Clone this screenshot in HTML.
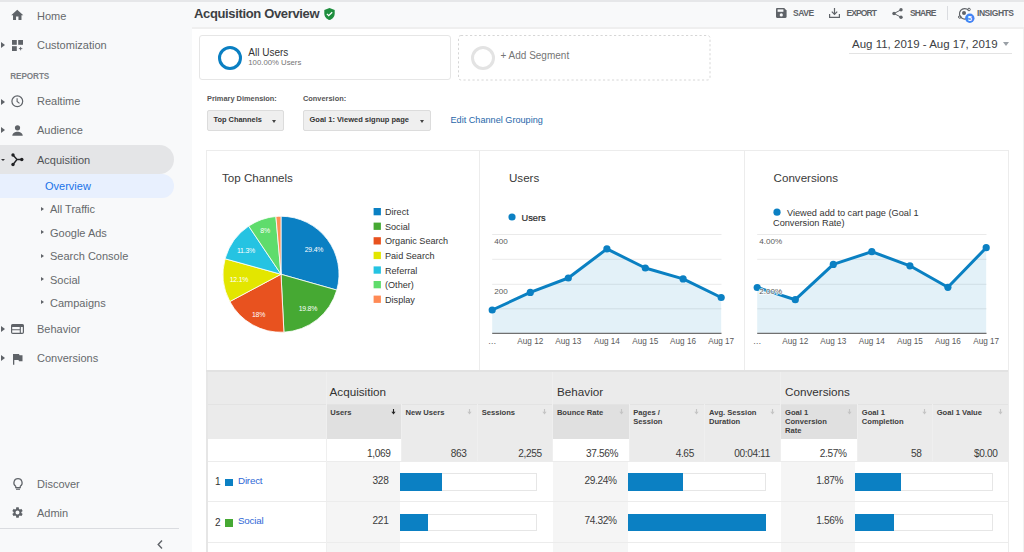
<!DOCTYPE html>
<html><head><meta charset="utf-8">
<style>
*{margin:0;padding:0;box-sizing:border-box}
html,body{width:1024px;height:552px;overflow:hidden;background:#f8f9fa;font-family:"Liberation Sans",sans-serif;color:#3c4043}
.a{position:absolute;white-space:nowrap}
#topline{position:absolute;left:0;top:0;width:1024px;height:2px;background:#e6e7e9}
/* sidebar */
.nav{position:absolute;left:37px;font-size:11px;color:#66696c;line-height:13px}
.sub{position:absolute;left:50px;font-size:11px;color:#66696c;line-height:13px}
.tri{position:absolute;width:0;height:0;border-top:3px solid transparent;border-bottom:3px solid transparent;border-left:4.2px solid #5f6368;margin-top:-0.3px}
.subtri{position:absolute;width:0;height:0;border-top:2.8px solid transparent;border-bottom:2.8px solid transparent;border-left:3.6px solid #5f6368;margin-top:-0.1px}
svg.i{position:absolute;overflow:visible}
/* header */
#content{position:absolute;left:192px;top:27px;width:832px;height:525px;background:#fff;border-top:2px solid #efefef}
.tb{position:absolute;top:8.2px;font-size:8.5px;font-weight:bold;color:#5f6368;line-height:10px;letter-spacing:-0.45px}
</style></head><body>
<div id="topline"></div>

<!-- SIDEBAR -->
<div class="a" style="left:0;top:145px;width:174px;height:29px;background:#e4e5e7;border-radius:0 15px 15px 0"></div>
<div class="a" style="left:0;top:174px;width:174px;height:23.5px;background:#e8f0fe;border-radius:0 12px 12px 0"></div>

<svg class="i" style="left:10.3px;top:8.4px" width="14.5" height="14.5" viewBox="0 0 24 24"><path fill="#5f6368" d="M10 20v-6h4v6h5v-8h3L12 3 2 12h3v8z"/></svg>
<div class="nav" style="top:10px">Home</div>

<div class="tri" style="left:1.2px;top:42.5px"></div>
<svg class="i" style="left:12px;top:39.5px" width="11" height="11" viewBox="0 0 11 11"><rect x="0" y="0" width="4.8" height="4.8" fill="#5f6368"/><rect x="6.2" y="0" width="4.8" height="4.8" fill="#5f6368"/><rect x="0" y="6.2" width="4.8" height="4.8" fill="#5f6368"/><path d="M8.6 6.9v3.4M6.9 8.6h3.4" stroke="#5f6368" stroke-width="0.9"/></svg>
<div class="nav" style="top:39px">Customization</div>

<div class="a" style="left:10.3px;top:71.5px;font-size:8.2px;font-weight:bold;color:#7d8185;letter-spacing:-0.1px;line-height:9px">REPORTS</div>

<div class="tri" style="left:1.2px;top:98.8px"></div>
<svg class="i" style="left:11px;top:95px" width="13" height="13" viewBox="0 0 13 13"><circle cx="6.3" cy="6.3" r="5.4" fill="none" stroke="#5f6368" stroke-width="1.2"/><path d="M6.1 3.3v3.2l2.4 1.9" fill="none" stroke="#5f6368" stroke-width="1.1"/></svg>
<div class="nav" style="top:95px">Realtime</div>

<div class="tri" style="left:1.2px;top:127.5px"></div>
<svg class="i" style="left:12px;top:125px" width="11" height="11" viewBox="0 0 11 11"><circle cx="5.5" cy="2.8" r="2.6" fill="#5f6368"/><path d="M0.3 10.7c0-2.6 3-3.9 5.2-3.9s5.2 1.3 5.2 3.9z" fill="#5f6368"/></svg>
<div class="nav" style="top:124px">Audience</div>

<div class="a" style="left:0.5px;top:158.6px;width:0;height:0;border-left:2.5px solid transparent;border-right:2.5px solid transparent;border-top:2.8px solid #303134"></div>
<svg class="i" style="left:11px;top:153px" width="13" height="13" viewBox="0 0 13 13"><path d="M2 2l4 4.5h5.5M2 11.5l4-5" fill="none" stroke="#202124" stroke-width="1.4"/><circle cx="2" cy="2" r="1.7" fill="#202124"/><circle cx="2" cy="11.5" r="1.7" fill="#202124"/><circle cx="10.8" cy="6.5" r="1.7" fill="#202124"/></svg>
<div class="nav" style="top:154px;color:#505356">Acquisition</div>

<div class="a" style="left:45px;top:180px;font-size:11px;color:#1a73e8;line-height:13px">Overview</div>

<div class="subtri" style="left:41px;top:207px"></div><div class="sub" style="top:203px">All Traffic</div>
<div class="subtri" style="left:41px;top:230.5px"></div><div class="sub" style="top:227px">Google Ads</div>
<div class="subtri" style="left:41px;top:254px"></div><div class="sub" style="top:250px">Search Console</div>
<div class="subtri" style="left:41px;top:277.5px"></div><div class="sub" style="top:274px">Social</div>
<div class="subtri" style="left:41px;top:300.5px"></div><div class="sub" style="top:297px">Campaigns</div>

<div class="tri" style="left:1.2px;top:326.5px"></div>
<svg class="i" style="left:11px;top:324px" width="13" height="10" viewBox="0 0 13 10"><rect x="0.6" y="0.6" width="11.8" height="8.8" rx="1.2" fill="none" stroke="#5f6368" stroke-width="1.2"/><rect x="0.6" y="0.6" width="11.8" height="2.4" fill="#5f6368"/><path d="M1 5.8h8.3M9.3 3v6.4" stroke="#5f6368" stroke-width="1.1"/></svg>
<div class="nav" style="top:323px">Behavior</div>

<div class="tri" style="left:1.2px;top:355.5px"></div>
<svg class="i" style="left:13px;top:353.5px" width="10" height="11" viewBox="0 0 10 11"><path d="M0 0h6l0.5 1.3H9.5v6H6l-0.5-1.3H1.3V10.7H0z" fill="#5f6368"/></svg>
<div class="nav" style="top:352px">Conversions</div>

<svg class="i" style="left:13px;top:478px" width="10" height="12" viewBox="0 0 10 12"><path d="M5 0.7a4.1 4.1 0 0 0-2.3 7.5v1.5h4.6V8.2A4.1 4.1 0 0 0 5 0.7z" fill="none" stroke="#5f6368" stroke-width="1.2"/><path d="M3 11.2h4" stroke="#5f6368" stroke-width="1.2"/></svg>
<div class="nav" style="top:478px">Discover</div>

<svg class="i" style="left:11px;top:506px" width="13" height="13" viewBox="0 0 24 24"><path fill="#5f6368" d="M19.14 12.94c.04-.3.06-.61.06-.94 0-.32-.02-.64-.07-.94l2.03-1.58a.49.49 0 0 0 .12-.61l-1.92-3.32a.488.488 0 0 0-.59-.22l-2.39.96c-.5-.38-1.03-.7-1.62-.94l-.36-2.54a.484.484 0 0 0-.48-.41h-3.84c-.24 0-.43.17-.47.41l-.36 2.54c-.59.24-1.13.57-1.62.94l-2.39-.96c-.22-.08-.47 0-.59.22L2.74 8.87c-.12.21-.08.47.12.61l2.03 1.58c-.05.3-.09.63-.09.94s.02.64.07.94l-2.03 1.58a.49.49 0 0 0-.12.61l1.92 3.32c.12.22.37.29.59.22l2.39-.96c.5.38 1.03.7 1.62.94l.36 2.54c.05.24.24.41.48.41h3.84c.24 0 .44-.17.47-.41l.36-2.54c.59-.24 1.13-.56 1.62-.94l2.39.96c.22.08.47 0 .59-.22l1.92-3.32c.12-.22.07-.47-.12-.61l-2.01-1.58zM12 15.6c-1.98 0-3.6-1.62-3.6-3.6s1.62-3.6 3.6-3.6 3.6 1.62 3.6 3.6-1.62 3.6-3.6 3.6z"/></svg>
<div class="nav" style="top:507px">Admin</div>

<div class="a" style="left:0;top:528px;width:179px;height:1px;background:#dadce0"></div>
<svg class="i" style="left:157px;top:539.5px" width="6" height="9" viewBox="0 0 6 9"><path d="M5 0.6L1.2 4.5 5 8.4" fill="none" stroke="#5f6368" stroke-width="1.4"/></svg>

<!-- HEADER -->
<div class="a" style="left:194px;top:6px;font-size:13px;font-weight:bold;color:#3c4043;letter-spacing:-0.35px;line-height:15px">Acquisition Overview</div>
<svg class="i" style="left:324px;top:7.5px" width="11" height="12" viewBox="0 0 11 12"><path d="M5.5 0L0.3 2.1v3.3c0 3 2.2 5.8 5.2 6.5 3-0.7 5.2-3.5 5.2-6.5V2.1z" fill="#1e8e3e"/><path d="M2.9 5.9l1.8 1.8 3.5-3.5" fill="none" stroke="#fff" stroke-width="1.3"/></svg>

<svg class="i" style="left:775.5px;top:8px" width="11" height="10" viewBox="0 0 11 10"><path d="M0 1.2C0 .5.5 0 1.2 0h7L10.6 2.4v6.4c0 .7-.5 1.2-1.2 1.2H1.2C.5 10 0 9.5 0 8.8z" fill="#5f6368"/><rect x="1.6" y="1.4" width="5.8" height="2.4" fill="#f8f9fa"/><circle cx="5.3" cy="6.9" r="1.6" fill="#f8f9fa"/></svg>
<div class="tb" style="left:793px">SAVE</div>
<svg class="i" style="left:829px;top:8px" width="11" height="10" viewBox="0 0 11 10"><path d="M5.5 0v6.2M2.8 3.7l2.7 2.7 2.7-2.7M0.6 6v3.4h9.8V6" fill="none" stroke="#5f6368" stroke-width="1.2"/></svg>
<div class="tb" style="left:846.5px;letter-spacing:-0.9px">EXPORT</div>
<svg class="i" style="left:892px;top:7.5px" width="11" height="11" viewBox="0 0 11 11"><circle cx="9" cy="1.8" r="1.7" fill="#5f6368"/><circle cx="2" cy="5.5" r="1.7" fill="#5f6368"/><circle cx="9" cy="9.2" r="1.7" fill="#5f6368"/><path d="M9 1.8L2 5.5 9 9.2" fill="none" stroke="#5f6368" stroke-width="1"/></svg>
<div class="tb" style="left:910px;letter-spacing:-0.85px">SHARE</div>
<div class="a" style="left:947px;top:6px;width:1px;height:14px;background:#dadce0"></div>
<svg class="i" style="left:957.5px;top:7px" width="16" height="16" viewBox="0 0 16 16"><path d="M10.4 3.2A5.2 5.2 0 1 0 11.2 9.4" fill="none" stroke="#5f6368" stroke-width="1.2"/><circle cx="6" cy="6" r="2" fill="#5f6368"/><circle cx="11" cy="2.5" r="1.3" fill="none" stroke="#5f6368" stroke-width="1"/><circle cx="1.8" cy="10" r="1.3" fill="none" stroke="#5f6368" stroke-width="1"/><circle cx="11.8" cy="11.2" r="4.7" fill="#4285f4"/><text x="11.8" y="13.9" font-size="7.6" font-weight="bold" fill="#fff" text-anchor="middle" font-family="Liberation Sans">5</text></svg>
<div class="tb" style="left:977px">INSIGHTS</div>

<div id="content"></div>
<div class="a" style="left:1023px;top:29px;width:1px;height:523px;background:#f1f1f1"></div>


<!-- SEGMENTS -->
<div class="a" style="left:199px;top:35px;width:252px;height:45px;border:1px solid #e6e6e6;border-radius:3px;background:#fff"></div>
<div class="a" style="left:218px;top:45.5px;width:24px;height:24px;border:3px solid #0a7fc2;border-radius:50%"></div>
<div class="a" style="left:248.3px;top:46.8px;font-size:10px;color:#333;line-height:11px">All Users</div>
<div class="a" style="left:248.3px;top:58.3px;font-size:7.75px;color:#757575;line-height:9px">100.00% Users</div>
<svg class="i" style="left:458px;top:35px" width="253" height="46" viewBox="0 0 253 46"><rect x="0.5" y="0.5" width="251.5" height="44.5" rx="2.5" fill="none" stroke="#d6d6d6" stroke-width="1" stroke-dasharray="2.2 2.3"/></svg>
<div class="a" style="left:470.5px;top:45.5px;width:24px;height:24px;border:3px solid #e3e3e3;border-radius:50%"></div>
<div class="a" style="left:500.5px;top:50px;font-size:10px;color:#757575;line-height:11px">+ Add Segment</div>

<div class="a" style="left:852px;top:38px;font-size:11.5px;color:#3c4043;line-height:13px">Aug 11, 2019 - Aug 17, 2019</div>
<div class="a" style="left:1002.5px;top:42.3px;width:0;height:0;border-left:3.7px solid transparent;border-right:3.7px solid transparent;border-top:4.3px solid #9aa0a6"></div>
<div class="a" style="left:849px;top:53px;width:163px;height:1px;background:#e3e3e3"></div>

<!-- DIMENSIONS -->
<div class="a" style="left:207px;top:95px;font-size:7.4px;font-weight:bold;color:#555;line-height:8px">Primary Dimension:</div>
<div class="a" style="left:206.5px;top:110.3px;width:77.5px;height:21px;background:#efefef;border:1px solid #dcdcdc;border-radius:2px"></div>
<div class="a" style="left:213.5px;top:116px;font-size:7.4px;font-weight:bold;color:#333;line-height:8px">Top Channels</div>
<div class="a" style="left:272.3px;top:119.7px;width:0;height:0;border-left:2.5px solid transparent;border-right:2.5px solid transparent;border-top:3px solid #444"></div>
<div class="a" style="left:303px;top:95px;font-size:7.4px;font-weight:bold;color:#555;line-height:8px">Conversion:</div>
<div class="a" style="left:303px;top:110.3px;width:128px;height:21px;background:#efefef;border:1px solid #dcdcdc;border-radius:2px"></div>
<div class="a" style="left:309.5px;top:116px;font-size:7.5px;font-weight:bold;color:#333;line-height:8px">Goal 1: Viewed signup page</div>
<div class="a" style="left:419.5px;top:119.7px;width:0;height:0;border-left:2.7px solid transparent;border-right:2.7px solid transparent;border-top:3px solid #444"></div>
<div class="a" style="left:450.5px;top:115px;font-size:9.15px;color:#2767aa;line-height:10px">Edit Channel Grouping</div>


























<!-- CHART PANEL -->
<div class="a" style="left:206px;top:150px;width:803px;height:221px;border:1.5px solid #ececec;border-bottom:none"></div>
<div class="a" style="left:479px;top:150px;width:1px;height:220px;background:#ececec"></div>
<div class="a" style="left:744px;top:150px;width:1px;height:220px;background:#ececec"></div>
<div class="a" style="left:222px;top:170.8px;font-size:11.6px;color:#3a3a3a;line-height:14px">Top Channels</div>
<div class="a" style="left:509px;top:170.8px;font-size:11.6px;color:#3a3a3a;line-height:14px">Users</div>
<div class="a" style="left:773.6px;top:170.8px;font-size:11.6px;color:#3a3a3a;line-height:14px">Conversions</div>
<svg class="i" style="left:0;top:0" width="1024" height="552" viewBox="0 0 1024 552" font-family="Liberation Sans">
<path d="M281.0,274.25L281.00,216.25A58.0,58.0 0 0 1 336.80,290.08Z" fill="#0b80c3" stroke="#fff" stroke-width="0.8" stroke-linejoin="round"/>
<path d="M281.0,274.25L336.80,290.08A58.0,58.0 0 0 1 283.91,332.18Z" fill="#46a933" stroke="#fff" stroke-width="0.8" stroke-linejoin="round"/>
<path d="M281.0,274.25L283.91,332.18A58.0,58.0 0 0 1 229.83,301.55Z" fill="#e8521f" stroke="#fff" stroke-width="0.8" stroke-linejoin="round"/>
<path d="M281.0,274.25L229.83,301.55A58.0,58.0 0 0 1 225.10,258.77Z" fill="#e3e600" stroke="#fff" stroke-width="0.8" stroke-linejoin="round"/>
<path d="M281.0,274.25L225.10,258.77A58.0,58.0 0 0 1 248.70,226.08Z" fill="#25c3e2" stroke="#fff" stroke-width="0.8" stroke-linejoin="round"/>
<path d="M281.0,274.25L248.70,226.08A58.0,58.0 0 0 1 275.90,216.47Z" fill="#5fdc6c" stroke="#fff" stroke-width="0.8" stroke-linejoin="round"/>
<path d="M281.0,274.25L275.90,216.47A58.0,58.0 0 0 1 281.00,216.25Z" fill="#ff8f55" stroke="#fff" stroke-width="0.8" stroke-linejoin="round"/>
<text x="314" y="252.0" text-anchor="middle" font-size="6.9" letter-spacing="-0.2" fill="#fff">29.4%</text>
<text x="307.9" y="311.4" text-anchor="middle" font-size="6.9" letter-spacing="-0.2" fill="#fff">19.8%</text>
<text x="258.5" y="317.0" text-anchor="middle" font-size="6.9" letter-spacing="-0.2" fill="#fff">18%</text>
<text x="239" y="281.6" text-anchor="middle" font-size="6.9" letter-spacing="-0.2" fill="#fff">12.1%</text>
<text x="246" y="252.7" text-anchor="middle" font-size="6.9" letter-spacing="-0.2" fill="#fff">11.3%</text>
<text x="265.1" y="232.7" text-anchor="middle" font-size="6.9" letter-spacing="-0.2" fill="#fff">8%</text>
<rect x="373.6" y="208.0" width="7.3" height="7.3" fill="#0b80c3"/>
<text x="385" y="215.2" font-size="9.1" fill="#333">Direct</text>
<rect x="373.6" y="222.6" width="7.3" height="7.3" fill="#46a933"/>
<text x="385" y="229.8" font-size="9.1" fill="#333">Social</text>
<rect x="373.6" y="237.2" width="7.3" height="7.3" fill="#e8521f"/>
<text x="385" y="244.4" font-size="9.1" fill="#333">Organic Search</text>
<rect x="373.6" y="251.8" width="7.3" height="7.3" fill="#e3e600"/>
<text x="385" y="259.0" font-size="9.1" fill="#333">Paid Search</text>
<rect x="373.6" y="266.4" width="7.3" height="7.3" fill="#25c3e2"/>
<text x="385" y="273.6" font-size="9.1" fill="#333">Referral</text>
<rect x="373.6" y="281.0" width="7.3" height="7.3" fill="#5fdc6c"/>
<text x="385" y="288.2" font-size="9.1" fill="#333">(Other)</text>
<rect x="373.6" y="295.6" width="7.3" height="7.3" fill="#ff8a55"/>
<text x="385" y="302.8" font-size="9.1" fill="#333">Display</text>
<path d="M492.2,234.5H721.5" stroke="#eaeaea" stroke-width="1"/>
<path d="M492.2,259.3H721.5" stroke="#eaeaea" stroke-width="1"/>
<path d="M492.2,284.3H721.5" stroke="#eaeaea" stroke-width="1"/>
<path d="M492.2,308.8H721.5" stroke="#eaeaea" stroke-width="1"/>
<path d="M492.2,310.0 L530.3,292.4 L568.3,278.0 L606.9,248.9 L645.3,268.0 L683.1,278.9 L721.2,297.5 L721.2,333.3 L492.2,333.3Z" fill="#0b80c3" fill-opacity="0.115"/>
<path d="M492.2,333.3H721.5" stroke="#707070" stroke-width="1.2"/>
<path d="M492.2,310.0 L530.3,292.4 L568.3,278.0 L606.9,248.9 L645.3,268.0 L683.1,278.9 L721.2,297.5" fill="none" stroke="#0a80c2" stroke-width="3" stroke-linejoin="round"/>
<circle cx="492.2" cy="310.0" r="3.6" fill="#0b80c3"/>
<circle cx="530.3" cy="292.4" r="3.6" fill="#0b80c3"/>
<circle cx="568.3" cy="278.0" r="3.6" fill="#0b80c3"/>
<circle cx="606.9" cy="248.9" r="3.6" fill="#0b80c3"/>
<circle cx="645.3" cy="268.0" r="3.6" fill="#0b80c3"/>
<circle cx="683.1" cy="278.9" r="3.6" fill="#0b80c3"/>
<circle cx="721.2" cy="297.5" r="3.6" fill="#0b80c3"/>
<text x="494.2" y="244.2" font-size="8.1" fill="#5a5a5a" stroke="#fff" stroke-width="1.6" stroke-opacity="0.85" paint-order="stroke" stroke-linejoin="round">400</text>
<text x="494.2" y="294.1" font-size="8.1" fill="#5a5a5a" stroke="#fff" stroke-width="1.6" stroke-opacity="0.85" paint-order="stroke" stroke-linejoin="round">200</text>
<text x="492.2" y="344.2" text-anchor="middle" font-size="8.4" fill="#5a5a5a">…</text>
<text x="530.3" y="344.2" text-anchor="middle" font-size="8.2" fill="#5a5a5a">Aug 12</text>
<text x="568.3" y="344.2" text-anchor="middle" font-size="8.2" fill="#5a5a5a">Aug 13</text>
<text x="606.9" y="344.2" text-anchor="middle" font-size="8.2" fill="#5a5a5a">Aug 14</text>
<text x="645.3" y="344.2" text-anchor="middle" font-size="8.2" fill="#5a5a5a">Aug 15</text>
<text x="683.1" y="344.2" text-anchor="middle" font-size="8.2" fill="#5a5a5a">Aug 16</text>
<text x="721.2" y="344.2" text-anchor="middle" font-size="8.2" fill="#5a5a5a">Aug 17</text>
<circle cx="512" cy="217" r="3.6" fill="#0b80c3"/><text x="521.6" y="220.8" font-size="9.2" fill="#2a2a2a" stroke="#2a2a2a" stroke-width="0.2">Users</text>
<path d="M757.2,234.5H986.5" stroke="#eaeaea" stroke-width="1"/>
<path d="M757.2,259.3H986.5" stroke="#eaeaea" stroke-width="1"/>
<path d="M757.2,284.3H986.5" stroke="#eaeaea" stroke-width="1"/>
<path d="M757.2,308.8H986.5" stroke="#eaeaea" stroke-width="1"/>
<path d="M757.2,287.5 L795.3,299.7 L833.3,264.4 L871.8,251.7 L909.9,265.8 L947.9,287.3 L986.2,247.7 L986.2,333.3 L757.2,333.3Z" fill="#0b80c3" fill-opacity="0.115"/>
<path d="M757.2,333.3H986.5" stroke="#707070" stroke-width="1.2"/>
<path d="M757.2,287.5 L795.3,299.7 L833.3,264.4 L871.8,251.7 L909.9,265.8 L947.9,287.3 L986.2,247.7" fill="none" stroke="#0a80c2" stroke-width="3" stroke-linejoin="round"/>
<circle cx="757.2" cy="287.5" r="3.6" fill="#0b80c3"/>
<circle cx="795.3" cy="299.7" r="3.6" fill="#0b80c3"/>
<circle cx="833.3" cy="264.4" r="3.6" fill="#0b80c3"/>
<circle cx="871.8" cy="251.7" r="3.6" fill="#0b80c3"/>
<circle cx="909.9" cy="265.8" r="3.6" fill="#0b80c3"/>
<circle cx="947.9" cy="287.3" r="3.6" fill="#0b80c3"/>
<circle cx="986.2" cy="247.7" r="3.6" fill="#0b80c3"/>
<text x="759.2" y="244.2" font-size="8.1" fill="#5a5a5a" stroke="#fff" stroke-width="1.6" stroke-opacity="0.85" paint-order="stroke" stroke-linejoin="round">4.00%</text>
<text x="759.2" y="294.1" font-size="8.1" fill="#5a5a5a" stroke="#fff" stroke-width="1.6" stroke-opacity="0.85" paint-order="stroke" stroke-linejoin="round">2.00%</text>
<text x="757.2" y="344.2" text-anchor="middle" font-size="8.4" fill="#5a5a5a">…</text>
<text x="795.3" y="344.2" text-anchor="middle" font-size="8.2" fill="#5a5a5a">Aug 12</text>
<text x="833.3" y="344.2" text-anchor="middle" font-size="8.2" fill="#5a5a5a">Aug 13</text>
<text x="871.8" y="344.2" text-anchor="middle" font-size="8.2" fill="#5a5a5a">Aug 14</text>
<text x="909.9" y="344.2" text-anchor="middle" font-size="8.2" fill="#5a5a5a">Aug 15</text>
<text x="947.9" y="344.2" text-anchor="middle" font-size="8.2" fill="#5a5a5a">Aug 16</text>
<text x="986.2" y="344.2" text-anchor="middle" font-size="8.2" fill="#5a5a5a">Aug 17</text>
<circle cx="777" cy="212.2" r="3.6" fill="#0b80c3"/><text x="787" y="215.6" font-size="9.2" fill="#333">Viewed add to cart page (Goal 1</text><text x="773" y="225.8" font-size="9.2" fill="#333">Conversion Rate)</text>
</svg>
<!-- END CHARTS -->


<!-- TABLE -->
<style>.th{font-size:7.6px;font-weight:bold;color:#404040;line-height:9.1px}
.td{font-size:10.1px;color:#3c3c3c;line-height:12px;letter-spacing:-0.35px}
</style>
<div class="a" style="left:206px;top:370.3px;width:802.4px;height:33.7px;background:#ebebeb;"></div>
<div class="a" style="left:206px;top:404px;width:802.4px;height:34.8px;background:#ebebeb;"></div>
<div class="a" style="left:326px;top:404px;width:75.3px;height:34.8px;background:#e0e0e0;"></div>
<div class="a" style="left:552.6px;top:404px;width:76.4px;height:34.8px;background:#e0e0e0;"></div>
<div class="a" style="left:780.7px;top:404px;width:76.8px;height:34.8px;background:#e0e0e0;"></div>
<div class="a" style="left:206px;top:438.8px;width:802.4px;height:22.6px;background:#ebebeb;"></div>
<div class="a" style="left:206px;top:438.8px;width:120.0px;height:22.6px;background:#fff;"></div>
<div class="a" style="left:326px;top:438.8px;width:75.3px;height:22.6px;background:#fff;"></div>
<div class="a" style="left:552.6px;top:438.8px;width:76.4px;height:22.6px;background:#fff;"></div>
<div class="a" style="left:780.7px;top:438.8px;width:76.8px;height:22.6px;background:#fff;"></div>
<div class="a" style="left:206px;top:403.5px;width:802.4px;height:1px;background:#e3e3e3"></div>
<div class="a" style="left:325.5px;top:370.3px;width:1px;height:91.1px;background:#efefef"></div>
<div class="a" style="left:400.8px;top:404px;width:1px;height:57.4px;background:#efefef"></div>
<div class="a" style="left:476.9px;top:404px;width:1px;height:57.4px;background:#efefef"></div>
<div class="a" style="left:552.1px;top:370.3px;width:1px;height:91.1px;background:#efefef"></div>
<div class="a" style="left:628.5px;top:404px;width:1px;height:57.4px;background:#efefef"></div>
<div class="a" style="left:704.2px;top:404px;width:1px;height:57.4px;background:#efefef"></div>
<div class="a" style="left:780.2px;top:370.3px;width:1px;height:91.1px;background:#efefef"></div>
<div class="a" style="left:857.0px;top:404px;width:1px;height:57.4px;background:#efefef"></div>
<div class="a" style="left:931.9px;top:404px;width:1px;height:57.4px;background:#efefef"></div>
<div class="a" style="left:329.5px;top:385px;font-size:11.7px;color:#333;line-height:14px">Acquisition</div>
<div class="a" style="left:557px;top:385px;font-size:11.7px;color:#333;line-height:14px">Behavior</div>
<div class="a" style="left:785px;top:385px;font-size:11.7px;color:#333;line-height:14px">Conversions</div>
<div class="a th" style="left:330.3px;top:408px">Users</div>
<svg class="i" style="left:390.8px;top:409.4px" width="5" height="5.5" viewBox="0 0 5 5.5"><path d="M2.5 0v3.5" stroke="#222" stroke-width="1.1"/><path d="M0.4 2.8h4.2L2.5 5.4z" fill="#222"/></svg>
<div class="a th" style="left:405.6px;top:408px">New Users</div>
<svg class="i" style="left:466.9px;top:409.4px" width="5" height="5.5" viewBox="0 0 5 5.5"><path d="M2.5 0v3.5" stroke="#c4c4c4" stroke-width="1.1"/><path d="M0.4 2.8h4.2L2.5 5.4z" fill="#c4c4c4"/></svg>
<div class="a th" style="left:481.7px;top:408px">Sessions</div>
<svg class="i" style="left:542.1px;top:409.4px" width="5" height="5.5" viewBox="0 0 5 5.5"><path d="M2.5 0v3.5" stroke="#c4c4c4" stroke-width="1.1"/><path d="M0.4 2.8h4.2L2.5 5.4z" fill="#c4c4c4"/></svg>
<div class="a th" style="left:556.9px;top:408px">Bounce Rate</div>
<svg class="i" style="left:618.5px;top:409.4px" width="5" height="5.5" viewBox="0 0 5 5.5"><path d="M2.5 0v3.5" stroke="#c4c4c4" stroke-width="1.1"/><path d="M0.4 2.8h4.2L2.5 5.4z" fill="#c4c4c4"/></svg>
<div class="a th" style="left:633.3px;top:408px">Pages /<br>Session</div>
<svg class="i" style="left:694.2px;top:409.4px" width="5" height="5.5" viewBox="0 0 5 5.5"><path d="M2.5 0v3.5" stroke="#c4c4c4" stroke-width="1.1"/><path d="M0.4 2.8h4.2L2.5 5.4z" fill="#c4c4c4"/></svg>
<div class="a th" style="left:709.0px;top:408px">Avg. Session<br>Duration</div>
<svg class="i" style="left:770.2px;top:409.4px" width="5" height="5.5" viewBox="0 0 5 5.5"><path d="M2.5 0v3.5" stroke="#c4c4c4" stroke-width="1.1"/><path d="M0.4 2.8h4.2L2.5 5.4z" fill="#c4c4c4"/></svg>
<div class="a th" style="left:785.0px;top:408px">Goal 1<br>Conversion<br>Rate</div>
<svg class="i" style="left:847.0px;top:409.4px" width="5" height="5.5" viewBox="0 0 5 5.5"><path d="M2.5 0v3.5" stroke="#c4c4c4" stroke-width="1.1"/><path d="M0.4 2.8h4.2L2.5 5.4z" fill="#c4c4c4"/></svg>
<div class="a th" style="left:861.8px;top:408px">Goal 1<br>Completion</div>
<svg class="i" style="left:921.9px;top:409.4px" width="5" height="5.5" viewBox="0 0 5 5.5"><path d="M2.5 0v3.5" stroke="#c4c4c4" stroke-width="1.1"/><path d="M0.4 2.8h4.2L2.5 5.4z" fill="#c4c4c4"/></svg>
<div class="a th" style="left:936.7px;top:408px">Goal 1 Value</div>
<svg class="i" style="left:997.9px;top:409.4px" width="5" height="5.5" viewBox="0 0 5 5.5"><path d="M2.5 0v3.5" stroke="#c4c4c4" stroke-width="1.1"/><path d="M0.4 2.8h4.2L2.5 5.4z" fill="#c4c4c4"/></svg>
<div class="a td" style="right:633.5px;top:447.8px">1,069</div>
<div class="a td" style="right:557.4px;top:447.8px">863</div>
<div class="a td" style="right:482.2px;top:447.8px">2,255</div>
<div class="a td" style="right:405.8px;top:447.8px">37.56%</div>
<div class="a td" style="right:330.1px;top:447.8px">4.65</div>
<div class="a td" style="right:254.1px;top:447.8px">00:04:11</div>
<div class="a td" style="right:177.3px;top:447.8px">2.57%</div>
<div class="a td" style="right:102.4px;top:447.8px">58</div>
<div class="a td" style="right:26.4px;top:447.8px">$0.00</div>
<div class="a" style="left:206px;top:461.4px;width:802.4px;height:40.4px;background:#fff;"></div>
<div class="a" style="left:326px;top:461.4px;width:74.0px;height:40.4px;background:#f5f5f5;"></div>
<div class="a" style="left:552.6px;top:461.4px;width:75.7px;height:40.4px;background:#f5f5f5;"></div>
<div class="a" style="left:780.7px;top:461.4px;width:74.0px;height:40.4px;background:#f5f5f5;"></div>
<div class="a" style="left:206px;top:460.9px;width:802.4px;height:1px;background:#ececec"></div>
<div class="a" style="left:325.5px;top:461.4px;width:1px;height:40.4px;background:#efefef"></div>
<div class="a" style="left:400px;top:473.4px;width:136.7px;height:17.3px;border:1px solid #e6e6e6;border-left:none;background:#fff"></div>
<div class="a" style="left:400px;top:473.4px;width:41.8px;height:17.3px;background:#0b80c3"></div>
<div class="a td" style="right:635.6px;top:475.0px">328</div>
<div class="a" style="left:628.3px;top:473.4px;width:138.0px;height:17.3px;border:1px solid #e6e6e6;border-left:none;background:#fff"></div>
<div class="a" style="left:628.3px;top:473.4px;width:54.3px;height:17.3px;background:#0b80c3"></div>
<div class="a td" style="right:407.3px;top:475.0px">29.24%</div>
<div class="a" style="left:854.7px;top:473.4px;width:138.6px;height:17.3px;border:1px solid #e6e6e6;border-left:none;background:#fff"></div>
<div class="a" style="left:854.7px;top:473.4px;width:46.3px;height:17.3px;background:#0b80c3"></div>
<div class="a td" style="right:180.9px;top:475.0px">1.87%</div>
<div class="a td" style="left:215px;top:476.4px;color:#333;font-size:10px">1</div>
<div class="a" style="left:225.3px;top:478.59999999999997px;width:7.6px;height:7.6px;background:#0b80c3;"></div>
<div class="a td" style="left:238px;top:475.0px;color:#3068d6;font-size:9.8px;letter-spacing:-0.2px">Direct</div>
<div class="a" style="left:206px;top:501.8px;width:802.4px;height:40.4px;background:#fff;"></div>
<div class="a" style="left:326px;top:501.8px;width:74.0px;height:40.4px;background:#f5f5f5;"></div>
<div class="a" style="left:552.6px;top:501.8px;width:75.7px;height:40.4px;background:#f5f5f5;"></div>
<div class="a" style="left:780.7px;top:501.8px;width:74.0px;height:40.4px;background:#f5f5f5;"></div>
<div class="a" style="left:206px;top:501.3px;width:802.4px;height:1px;background:#ececec"></div>
<div class="a" style="left:325.5px;top:501.8px;width:1px;height:40.4px;background:#efefef"></div>
<div class="a" style="left:400px;top:513.8px;width:136.7px;height:17.3px;border:1px solid #e6e6e6;border-left:none;background:#fff"></div>
<div class="a" style="left:400px;top:513.8px;width:27.8px;height:17.3px;background:#0b80c3"></div>
<div class="a td" style="right:635.6px;top:515.4px">221</div>
<div class="a" style="left:628.3px;top:513.8px;width:138.0px;height:17.3px;border:1px solid #e6e6e6;border-left:none;background:#fff"></div>
<div class="a" style="left:628.3px;top:513.8px;width:138.0px;height:17.3px;background:#0b80c3"></div>
<div class="a td" style="right:407.3px;top:515.4px">74.32%</div>
<div class="a" style="left:854.7px;top:513.8px;width:138.6px;height:17.3px;border:1px solid #e6e6e6;border-left:none;background:#fff"></div>
<div class="a" style="left:854.7px;top:513.8px;width:39.3px;height:17.3px;background:#0b80c3"></div>
<div class="a td" style="right:180.9px;top:515.4px">1.56%</div>
<div class="a td" style="left:215px;top:516.8px;color:#333;font-size:10px">2</div>
<div class="a" style="left:225.3px;top:519.0px;width:7.6px;height:7.6px;background:#46a933;"></div>
<div class="a td" style="left:238px;top:515.4px;color:#3068d6;font-size:9.8px;letter-spacing:-0.2px">Social</div>
<div class="a" style="left:206px;top:542.2px;width:802.4px;height:40.4px;background:#fff;"></div>
<div class="a" style="left:326px;top:542.2px;width:74.0px;height:40.4px;background:#f5f5f5;"></div>
<div class="a" style="left:552.6px;top:542.2px;width:75.7px;height:40.4px;background:#f5f5f5;"></div>
<div class="a" style="left:780.7px;top:542.2px;width:74.0px;height:40.4px;background:#f5f5f5;"></div>
<div class="a" style="left:206px;top:541.7px;width:802.4px;height:1px;background:#ececec"></div>
<div class="a" style="left:325.5px;top:542.2px;width:1px;height:40.4px;background:#efefef"></div>
<div class="a" style="left:206px;top:370px;width:1.5px;height:182px;background:#e6e6e6"></div>
<div class="a" style="left:206px;top:370px;width:802.4px;height:1.5px;background:#e2e2e2"></div>
<div class="a" style="left:1008.4px;top:370px;width:1px;height:182px;background:#ececec"></div>
<!-- END TABLE -->
</body></html>
